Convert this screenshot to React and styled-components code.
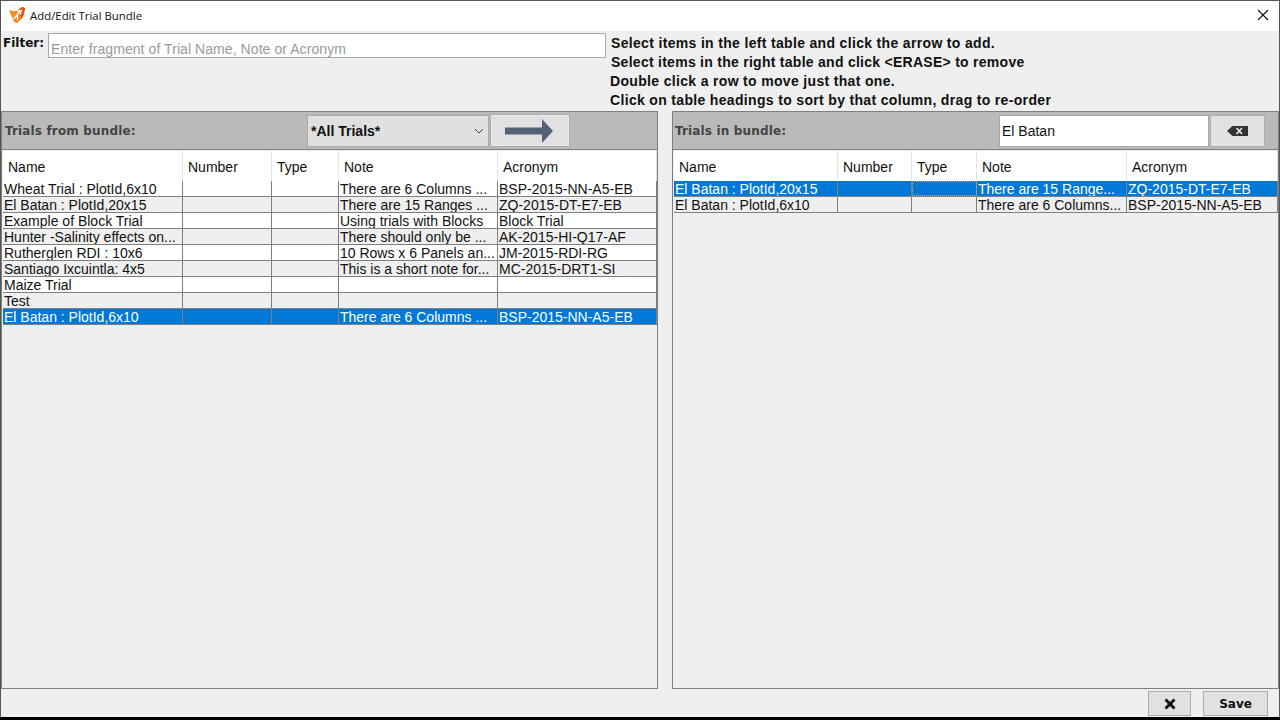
import React from 'react'
import styled, { createGlobalStyle } from 'styled-components'

const GlobalStyle = createGlobalStyle`
  html, body {
    margin: 0;
    padding: 0;
    background: #000;
  }
  body {
    font-family: "Liberation Sans", Arial, sans-serif;
  }
  * {
    box-sizing: border-box;
  }
`

const leftColumns = '180px 89px 67px 159px 1fr'
const rightColumns = '164px 74px 65px 150px 1fr'

const leftRows = [
  ['Wheat Trial : PlotId,6x10', 'There are 6 Columns ...', 'BSP-2015-NN-A5-EB'],
  ['El Batan : PlotId,20x15', 'There are 15 Ranges ...', 'ZQ-2015-DT-E7-EB'],
  ['Example of Block Trial', 'Using trials with Blocks', 'Block Trial'],
  ['Hunter -Salinity effects on...', 'There should only be ...', 'AK-2015-HI-Q17-AF'],
  ['Rutherglen RDI : 10x6', '10 Rows x 6 Panels an...', 'JM-2015-RDI-RG'],
  ['Santiago Ixcuintla: 4x5', 'This is a short note for...', 'MC-2015-DRT1-SI'],
  ['Maize Trial', '', ''],
  ['Test', '', ''],
  ['El Batan : PlotId,6x10', 'There are 6 Columns ...', 'BSP-2015-NN-A5-EB']
]

const rightRows = [
  ['El Batan : PlotId,20x15', 'There are 15 Range...', 'ZQ-2015-DT-E7-EB'],
  ['El Batan : PlotId,6x10', 'There are 6 Columns...', 'BSP-2015-NN-A5-EB']
]

const headings = ['Name', 'Number', 'Type', 'Note', 'Acronym']

function AppLogo () {
  return (
    <svg width='16' height='16' viewBox='0 0 16 16'>
      <path d='M0 3 L5 4.5 L9 3 L13 0 L16 1 L15 7 L12.5 12 L8 16 L5 15 L2.5 9 Z' fill='#f28a1e' />
      <path d='M9 3 L13 0 L16 1 L15 7 L12.5 12 L11 8 Z' fill='#e2531c' />
      <path d='M4.5 12 L11 4.5 M8 4 L12 3.5 L11.5 7.5 M8.5 7.5 L8.5 13' stroke='#fff' strokeWidth='1.3' fill='none' />
    </svg>
  )
}

function CloseGlyph () {
  return (
    <svg width='12' height='12' viewBox='0 0 12 12'>
      <path d='M1 1 L11 11 M11 1 L1 11' stroke='#111' strokeWidth='1.1' />
    </svg>
  )
}

function ArrowGlyph () {
  return (
    <svg width='48' height='24' viewBox='0 0 48 24'>
      <path d='M0 8.5 H37 V0 L48 12 L37 24 V15.5 H0 Z' fill='#536278' />
    </svg>
  )
}

function EraseGlyph () {
  return (
    <svg width='21' height='10' viewBox='0 0 21 10'>
      <path d='M0 5 L5.5 0 H21 V10 H5.5 Z' fill='#333' />
      <path d='M9.5 2 L15 8 M15 2 L9.5 8' stroke='#eee' strokeWidth='1.6' />
    </svg>
  )
}

function CrossGlyph () {
  return (
    <svg width='12' height='12' viewBox='0 0 12 12'>
      <path d='M1.5 1.5 L10.5 10.5 M10.5 1.5 L1.5 10.5' stroke='#111' strokeWidth='3' />
    </svg>
  )
}

function ChevronGlyph () {
  return (
    <svg width='10' height='6' viewBox='0 0 10 6'>
      <path d='M1 1 L5 5 L9 1' stroke='#444' strokeWidth='1' fill='none' />
    </svg>
  )
}

function TrialTable ({ columns, rows, selected, focusCell }) {
  return (
    <Table>
      <HeadRow $columns={columns}>
        {headings.map(h => <HeadCell key={h}>{h}</HeadCell>)}
      </HeadRow>
      {rows.map((row, i) => (
        <Row key={i} $columns={columns} $odd={i % 2 === 1} $selected={i === selected}>
          <Cell>{row[0]}</Cell>
          <Cell />
          <Cell $focus={focusCell && i === selected} />
          <Cell>{row[1]}</Cell>
          <Cell>{row[2]}</Cell>
        </Row>
      ))}
    </Table>
  )
}

export default function App () {
  return (
    <>
      <GlobalStyle />
      <Screen>
        <TitleBar>
          <TitleLeft>
            <AppLogo />
            <TitleText>Add/Edit Trial Bundle</TitleText>
          </TitleLeft>
          <CloseButton><CloseGlyph /></CloseButton>
        </TitleBar>
        <Body>
          <TopArea>
            <FilterLabel>Filter:</FilterLabel>
            <FilterInput>Enter fragment of Trial Name, Note or Acronym</FilterInput>
            <Help>
              <HelpLine>Select items in the left table and click the arrow to add.</HelpLine>
              <HelpLine $tight>Select items in the right table and click &lt;ERASE&gt; to remove</HelpLine>
              <HelpLine $nudge>Double click a row to move just that one.</HelpLine>
              <HelpLine $nudge>Click on table headings to sort by that column, drag to re-order</HelpLine>
            </Help>
          </TopArea>
          <Panels>
            <Panel>
              <PanelHead>
                <PanelTitle>Trials from bundle:</PanelTitle>
                <Select>*All Trials*<ChevronGlyph /></Select>
                <ArrowButton><ArrowGlyph /></ArrowButton>
              </PanelHead>
              <TrialTable columns={leftColumns} rows={leftRows} selected={8} />
            </Panel>
            <Panel>
              <PanelHead $tight>
                <PanelTitle>Trials in bundle:</PanelTitle>
                <SearchBox>El Batan</SearchBox>
                <EraseButton><EraseGlyph /></EraseButton>
              </PanelHead>
              <TrialTable columns={rightColumns} rows={rightRows} selected={0} focusCell />
            </Panel>
          </Panels>
          <Footer>
            <CancelButton><CrossGlyph /></CancelButton>
            <SaveButton>Save</SaveButton>
          </Footer>
        </Body>
      </Screen>
    </>
  )
}

const Screen = styled.div`
  width: 1280px;
  height: 717px;
  border-left: 1px solid #555;
  border-right: 1px solid #555;
  border-top: 1px solid #555;
  display: flex;
  flex-direction: column;
  overflow: hidden;
  background: #efefef;
`
const TitleBar = styled.div`
  height: 30px;
  flex: none;
  background: #fff;
  display: flex;
  align-items: center;
  justify-content: space-between;
  padding: 0 10px 2px 8px;
`
const TitleLeft = styled.div`
  display: flex;
  align-items: center;
  gap: 5px;
`
const TitleText = styled.span`
  font-family: "Open Sans", sans-serif;
  font-size: 11.4px;
  color: #111;
`
const CloseButton = styled.div`
  display: flex;
`
const Body = styled.div`
  flex: 1;
  display: flex;
  flex-direction: column;
  min-height: 0;
`
const TopArea = styled.div`
  height: 80px;
  flex: none;
  display: flex;
  align-items: flex-start;
  padding: 2px 0 0 2px;
`
const FilterLabel = styled.div`
  width: 45px;
  flex: none;
  font-family: "DejaVu Sans", sans-serif;
  font-size: 12px;
  font-weight: bold;
  color: #111;
  line-height: 20px;
`
const FilterInput = styled.div`
  width: 558px;
  height: 25px;
  flex: none;
  border: 1px solid #a8a8a8;
  background: #fff;
  color: #9a9a9a;
  font-size: 14px;
  letter-spacing: 0.07px;
  line-height: 30px;
  padding-left: 2px;
`
const Help = styled.div`
  margin-left: 5px;
  margin-top: 1px;
`
const HelpLine = styled.div`
  font-size: 14px;
  font-weight: bold;
  letter-spacing: ${p => p.$tight ? '0.27px' : '0.33px'};
  line-height: 19px;
  color: #111;
  margin-left: ${p => p.$nudge ? '-1px' : '0'};
  white-space: nowrap;
`
const Panels = styled.div`
  flex: 1;
  display: grid;
  grid-template-columns: 657px 607px;
  column-gap: 14px;
  min-height: 0;
`
const Panel = styled.div`
  display: flex;
  flex-direction: column;
  border: 1px solid #7f7f7f;
  min-height: 0;
`
const PanelHead = styled.div`
  height: 38px;
  flex: none;
  background: #bababa;
  border-bottom: 1px solid #7f7f7f;
  display: flex;
  align-items: center;
  padding-left: ${p => p.$tight ? '2px' : '3px'};
`
const PanelTitle = styled.div`
  font-family: "DejaVu Sans", sans-serif;
  font-size: 12px;
  font-weight: bold;
  letter-spacing: 0.15px;
  color: #444;
  flex: 1;
`
const Select = styled.div`
  width: 182px;
  height: 32px;
  background: #e0e0e0;
  border: 1px solid #ababab;
  font-size: 14px;
  font-weight: bold;
  color: #111;
  display: flex;
  align-items: center;
  justify-content: space-between;
  padding: 0 4px 0 3px;
`
const GrayButton = styled.div`
  background: #e1e1e1;
  border: 1px solid #adadad;
  display: flex;
  align-items: center;
  justify-content: center;
`
const ArrowButton = styled(GrayButton)`
  width: 80px;
  height: 33px;
  margin-left: 1px;
  margin-right: 87px;
  padding-right: 2px;
  box-shadow: inset 0 0 0 1px #eaeaea;
`
const SearchBox = styled.div`
  width: 210px;
  height: 32px;
  background: #fff;
  border: 1px solid #a8a8a8;
  font-size: 14px;
  color: #111;
  line-height: 31px;
  padding-left: 2px;
`
const EraseButton = styled(GrayButton)`
  width: 55px;
  height: 32px;
  margin-left: 1px;
  margin-right: 13px;
`
const Table = styled.div`
  flex: 1;
  min-height: 0;
  padding: 1px 0 0 1px;
  background: #efefef;
`
const HeadRow = styled.div`
  display: grid;
  grid-template-columns: ${p => p.$columns};
  height: 30px;
  background: #fff;
`
const HeadCell = styled.div`
  font-size: 14px;
  color: #111;
  line-height: 32px;
  padding-left: 5px;
  border-right: 1px solid #e4e4e4;
`
const Row = styled.div`
  display: grid;
  grid-template-columns: ${p => p.$columns};
  height: 16px;
  border-bottom: 1px solid #808080;
  background: ${p => p.$selected ? '#0078d7' : p.$odd ? '#efefef' : '#fff'};
  color: ${p => p.$selected ? '#fff' : '#111'};
`
const Cell = styled.div`
  font-size: 14px;
  line-height: 17px;
  padding-left: 1px;
  border-right: 1px solid #808080;
  white-space: nowrap;
  overflow: hidden;
  outline: ${p => p.$focus ? '1px dotted #e0a050' : 'none'};
  outline-offset: -1px;
`
const Footer = styled.div`
  height: 28px;
  flex: none;
  display: flex;
  justify-content: flex-end;
  align-items: flex-start;
  padding: 2px 11px 0 0;
  gap: 12px;
`
const CancelButton = styled(GrayButton)`
  width: 43px;
  height: 25px;
`
const SaveButton = styled(GrayButton)`
  width: 65px;
  height: 25px;
  font-family: "DejaVu Sans", sans-serif;
  font-size: 12px;
  font-weight: bold;
  color: #111;
`
